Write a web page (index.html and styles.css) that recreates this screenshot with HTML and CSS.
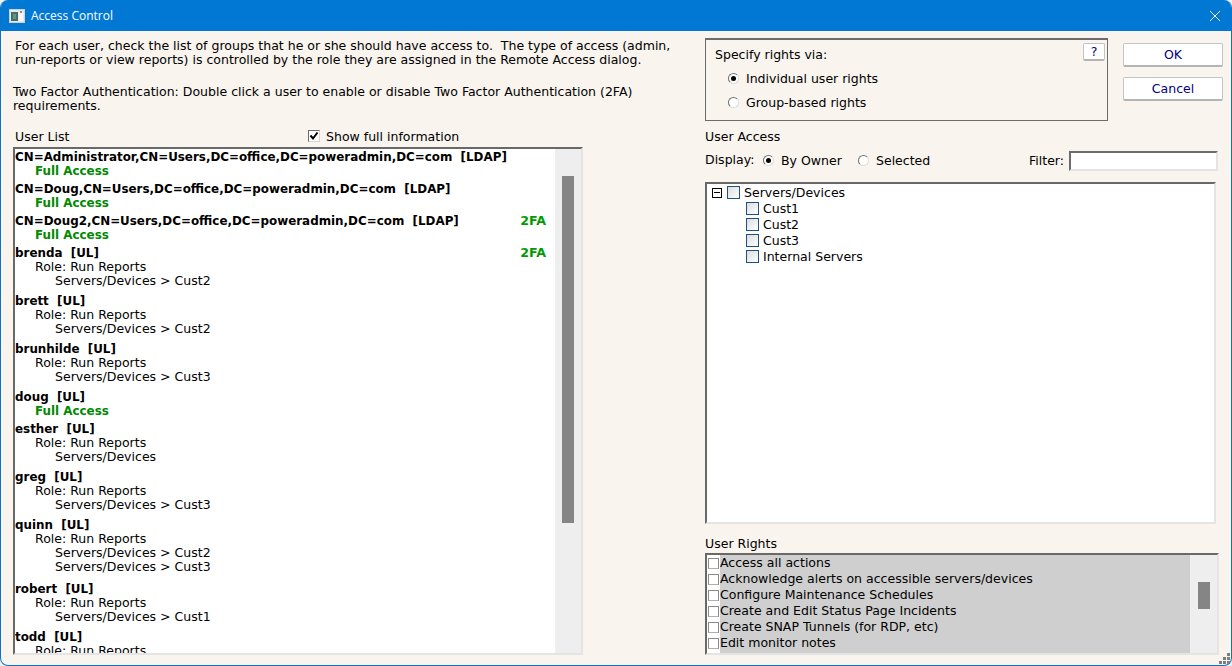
FILE: index.html
```html
<!DOCTYPE html>
<html lang="en">
<head>
<meta charset="utf-8">
<title>Access Control</title>
<link rel="stylesheet" href="styles.css">
</head>
<body>
<div class="window">
  <header class="titlebar">
    <svg class="app-icon" width="16" height="14" viewBox="0 0 16 14"><rect x="0.5" y="0.5" width="15" height="13" fill="#e8e8e8" stroke="#c8d4de"/><rect x="2" y="3" width="7" height="9" fill="#4a6a6c"/><rect x="4" y="5" width="3" height="5" fill="#5f9a78"/><rect x="10" y="3" width="4" height="9" fill="#f6f6f6"/><rect x="11" y="2" width="2" height="2" fill="#7b8f99"/></svg>
    <span class="title">Access Control</span>
    <svg class="close" width="12" height="12" viewBox="0 0 12 12"><path d="M1 1 L11 11 M11 1 L1 11" stroke="#fff" stroke-width="1" fill="none"/></svg>
  </header>
  <main class="content">
    <section class="left">
      <p class="intro">For each user, check the list of groups that he or she should have access to.&nbsp; The type of access (admin,<br>run-reports or view reports) is controlled by the role they are assigned in the Remote Access dialog.</p>
      <p class="twofa">Two Factor Authentication: Double click a user to enable or disable Two Factor Authentication (2FA)<br>requirements.</p>
      <div class="list-head">
        <span class="list-title">User List</span>
        <span class="show-full"><span class="checkbox flat"><svg width="10" height="10" viewBox="0 0 10 10"><path d="M1.5 4.5 L4 7.5 L8.5 1.5" stroke="#000" stroke-width="2" fill="none"/></svg></span>Show full information</span>
      </div>
      <div class="sunken user-box">
        <div class="user-list">
          <div class="user g2"><div class="head"><b>CN=Administrator,CN=Users,DC=office,DC=poweradmin,DC=com&nbsp; [LDAP]</b></div><div class="full">Full Access</div></div>
          <div class="user g2"><div class="head"><b>CN=Doug,CN=Users,DC=office,DC=poweradmin,DC=com&nbsp; [LDAP]</b></div><div class="full">Full Access</div></div>
          <div class="user g2"><div class="head"><b>CN=Doug2,CN=Users,DC=office,DC=poweradmin,DC=com&nbsp; [LDAP]</b><b class="tfa">2FA</b></div><div class="full">Full Access</div></div>
          <div class="user g3"><div class="head"><b>brenda&nbsp; [UL]</b><b class="tfa">2FA</b></div><div class="role">Role: Run Reports</div><div class="path">Servers/Devices &gt; Cust2</div></div>
          <div class="user g3"><div class="head"><b>brett&nbsp; [UL]</b></div><div class="role">Role: Run Reports</div><div class="path">Servers/Devices &gt; Cust2</div></div>
          <div class="user g3"><div class="head"><b>brunhilde&nbsp; [UL]</b></div><div class="role">Role: Run Reports</div><div class="path">Servers/Devices &gt; Cust3</div></div>
          <div class="user g2"><div class="head"><b>doug&nbsp; [UL]</b></div><div class="full">Full Access</div></div>
          <div class="user g3"><div class="head"><b>esther&nbsp; [UL]</b></div><div class="role">Role: Run Reports</div><div class="path">Servers/Devices</div></div>
          <div class="user g3"><div class="head"><b>greg&nbsp; [UL]</b></div><div class="role">Role: Run Reports</div><div class="path">Servers/Devices &gt; Cust3</div></div>
          <div class="user g4"><div class="head"><b>quinn&nbsp; [UL]</b></div><div class="role">Role: Run Reports</div><div class="path">Servers/Devices &gt; Cust2</div><div class="path">Servers/Devices &gt; Cust3</div></div>
          <div class="user g3"><div class="head"><b>robert&nbsp; [UL]</b></div><div class="role">Role: Run Reports</div><div class="path">Servers/Devices &gt; Cust1</div></div>
          <div class="user g3"><div class="head"><b>todd&nbsp; [UL]</b></div><div class="role">Role: Run Reports</div></div>
        </div>
        <div class="scrollbar user-scroll"><div class="thumb"></div></div>
      </div>
    </section>
    <section class="right">
      <div class="top-row">
        <div class="groupbox">
          <div>Specify rights via:</div>
          <div class="radio-row"><span class="radio on"></span>Individual user rights</div>
          <div class="radio-row"><span class="radio"></span>Group-based rights</div>
          <button class="btn help" type="button">?</button>
        </div>
        <div class="actions">
          <button class="btn" type="button">OK</button>
          <button class="btn" type="button">Cancel</button>
        </div>
      </div>
      <div class="section-label">User Access</div>
      <div class="display-row">
        <span class="display-label">Display:</span>
        <span class="display-opt owner"><span class="radio on"></span>By Owner</span>
        <span class="display-opt"><span class="radio"></span>Selected</span>
        <span class="filter">Filter:<span class="filter-input"></span></span>
      </div>
      <div class="sunken tree">
        <div class="tree-row"><span class="expander"></span><span class="tcheck"></span>Servers/Devices</div>
        <div class="tree-row child"><span class="tcheck"></span>Cust1</div>
        <div class="tree-row child"><span class="tcheck"></span>Cust2</div>
        <div class="tree-row child"><span class="tcheck"></span>Cust3</div>
        <div class="tree-row child"><span class="tcheck"></span>Internal Servers</div>
      </div>
      <div class="section-label rights-label">User Rights</div>
      <div class="sunken rights-box">
        <div class="rights">
          <div class="right-row"><span class="checkbox"></span><span class="right-text">Access all actions</span></div>
          <div class="right-row"><span class="checkbox"></span><span class="right-text">Acknowledge alerts on accessible servers/devices</span></div>
          <div class="right-row"><span class="checkbox"></span><span class="right-text">Configure Maintenance Schedules</span></div>
          <div class="right-row"><span class="checkbox"></span><span class="right-text">Create and Edit Status Page Incidents</span></div>
          <div class="right-row"><span class="checkbox"></span><span class="right-text">Create SNAP Tunnels (for RDP, etc)</span></div>
          <div class="right-row"><span class="checkbox"></span><span class="right-text">Edit monitor notes</span></div>
        </div>
        <div class="scrollbar rights-scroll"><div class="thumb"></div></div>
      </div>
    </section>
  </main>
  <svg class="grip" width="11" height="11" viewBox="0 0 11 11" fill="#7d7d7d"><rect x="8" y="0" width="3" height="3"/><rect x="4" y="4" width="3" height="3"/><rect x="8" y="4" width="3" height="3"/><rect x="0" y="8" width="3" height="3"/><rect x="4" y="8" width="3" height="3"/><rect x="8" y="8" width="3" height="3"/></svg>
</div>
</body>
</html>
```
FILE: styles.css
```css
* { box-sizing: border-box; }
html, body { margin: 0; height: 100%; background: #eef1f3; }
body { font: 12.53px/14px "DejaVu Sans", Verdana, sans-serif; color: #000; overflow: hidden; }
p { margin: 0; }
b, .full { font-size: 11.9px; }

.window { position: relative; width: 1232px; height: 666px; display: flex; flex-direction: column; background: #f9f4ee; border: 1px solid #0b74c8; border-top: 0; border-radius: 8px; overflow: hidden; }
.titlebar { height: 31px; flex: none; margin: 0 -1px; background: #0078d4; color: #fff; display: flex; align-items: center; padding-left: 9px; padding-right: 11px; }
.app-icon { flex: none; }
.title { font: 12px/16px "Open Sans", "Noto Sans", sans-serif; margin-left: 6px; }
.close { margin-left: auto; }

.content { flex: 1; display: flex; min-height: 0; }
.left { width: 704px; flex: none; padding: 8px 0 0 12px; }
.right { flex: 1; padding-top: 7px; min-width: 0; }

.intro { margin-left: 2px; }
.twofa { margin-top: 18px; }
.list-head { display: flex; height: 14px; margin: 17px 0 3px 2px; }
.list-title { width: 293px; }
.show-full { display: flex; align-items: center; }
.show-full .checkbox { margin: 0 6px 2px 0; }

.sunken { border: 2px solid; border-color: #696969 #e4e4e4 #e4e4e4 #696969; }
.user-box { width: 570px; height: 508px; display: flex; background: #fff; }
.user-list { flex: 1; min-width: 0; overflow: hidden; padding: 1px 9px 0 0; }
.user { line-height: 14px; }
.g2 { padding-bottom: 4px; }
.g3 { padding-bottom: 6px; }
.g4 { padding-bottom: 8px; }
.head { display: flex; justify-content: space-between; white-space: nowrap; }
.tfa { color: #009a00; font-size: 12.6px; }
.full { color: #008a00; font-weight: bold; padding-left: 20px; }
.role { padding-left: 20px; }
.path { padding-left: 40px; }

.scrollbar { flex: none; background: #eeeeee; position: relative; }
.thumb { position: absolute; background: #858585; }
.user-scroll { width: 26px; }
.user-scroll .thumb { left: 7px; top: 27px; width: 12px; height: 347px; }
.rights-scroll { width: 27px; }
.rights-scroll .thumb { left: 8px; top: 27px; width: 12px; height: 27px; }

.top-row { display: flex; }
.groupbox { position: relative; width: 403px; height: 83px; border: 1px solid #6c6c6c; border-top-width: 2px; padding: 8px 0 0 9px; }
.radio-row { display: flex; align-items: center; margin: 10px 0 0 13px; }
.radio { width: 11px; height: 11px; border-radius: 50%; background: #fff; border: 1px solid #707070; border-right-color: #dcdcdc; border-bottom-color: #dcdcdc; flex: none; margin: 0 7px 2px 0; position: relative; }
.radio.on::after { content: ""; position: absolute; left: 2px; top: 2px; width: 5px; height: 5px; border-radius: 50%; background: #000; }
.btn { font: inherit; color: #00007f; background: #fff; border: 1px solid #c4c4c4; border-bottom: 2px solid #b4b4b4; border-radius: 2px; padding: 0; width: 100px; height: 24px; }
.help { position: absolute; top: 3px; right: 2px; width: 22px; height: 18px; }
.actions { display: flex; flex-direction: column; gap: 10px; margin: 5px 0 0 15px; }

.section-label { margin-top: 9px; }
.display-row { display: flex; align-items: center; margin-top: 7px; height: 20px; width: 513px; }
.display-label { width: 58px; margin-bottom: 2px; }
.display-opt { display: flex; align-items: center; }
.owner { width: 95px; }
.filter { margin-left: auto; display: flex; align-items: center; gap: 5px; }
.filter-input { width: 149px; height: 20px; background: #fff; border: 2px solid; border-color: #6c6c6c #e4e4e4 #e4e4e4 #6c6c6c; }

.tree { margin-top: 11px; width: 511px; height: 342px; background: #fff; padding-top: 1px; }
.tree-row { display: flex; align-items: center; height: 16px; padding-left: 5px; }
.child { padding-left: 39px; }
.expander { width: 10px; height: 10px; border: 1px solid #000; position: relative; margin-right: 5px; flex: none; }
.expander::after { content: ""; position: absolute; left: 1px; right: 1px; top: 3px; height: 1px; background: #000; }
.tcheck { width: 13px; height: 13px; border: 1px solid #1c5180; background: linear-gradient(135deg, #dcdcdc, #ffffff); margin: 0 4px 1px 0; flex: none; }

.checkbox { display: inline-flex; align-items: center; justify-content: center; width: 11px; height: 11px; background: #fff; border: 1px solid #8a8a8a; border-right-color: #d8d8d8; border-bottom-color: #d8d8d8; flex: none; }
.checkbox.flat { width: 12px; height: 12px; border-color: #6c6c6c #d8d8d8 #d8d8d8 #6c6c6c; }

.section-label.rights-label { margin-top: 13px; }
.rights-box { margin-top: 2px; width: 514px; height: 102px; display: flex; background: #fff; }
.rights { flex: 1; min-width: 0; background: linear-gradient(90deg, #fff 13px, #cfcfcf 13px); overflow: hidden; padding: 0 0 0 1px; }
.right-row { display: flex; align-items: center; height: 16px; }
.right-row .checkbox { margin-right: 1px; background: transparent; border-color: #8a8a8a #8a8a8a #b0b0b0 #8a8a8a; }
.right-text { white-space: nowrap; }

.grip { position: absolute; right: 1px; bottom: 1px; }
```
